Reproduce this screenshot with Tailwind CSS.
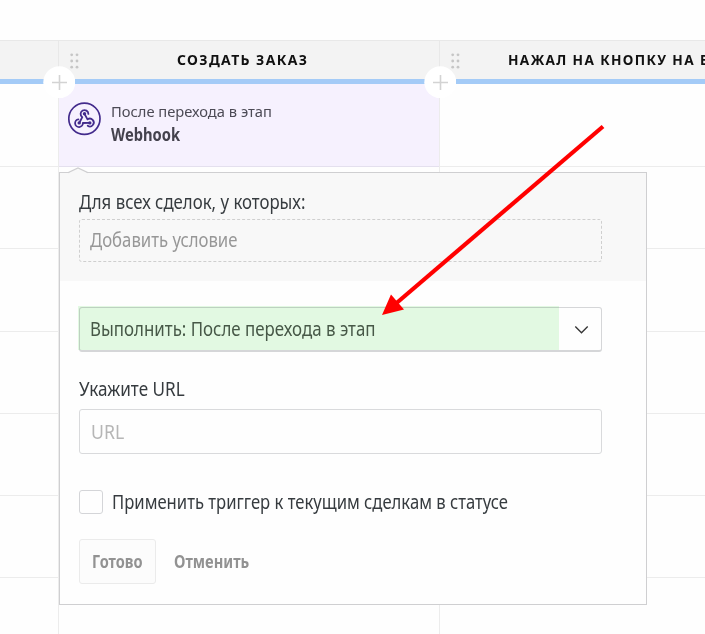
<!DOCTYPE html>
<html lang="ru">
<head>
<meta charset="utf-8">
<title>Webhook</title>
<script src="https://cdn.jsdelivr.net/npm/@tailwindcss/browser@4"></script>
</head>
<body class="relative h-[634px] w-[705px] overflow-hidden bg-[#fefefe] font-['Noto_Sans',sans-serif] text-[#363b3f]">
<!-- Board -->
<div class="flex h-[634px] w-[705px] flex-col pt-10">
  <header class="flex h-[44px] shrink-0 border-t border-b-[5px] border-t-[#e8e8e8] border-b-[#a4cbf7] bg-[#f3f3f3] text-[15px] leading-[20px] font-bold text-[#111] whitespace-nowrap">
    <div class="w-[59px] shrink-0 border-r border-[#e8e8e8]"></div>
    <div class="flex w-[381px] shrink-0 border-r border-[#e8e8e8] pt-[8px]">
      <svg class="mt-[4px] ml-[11px] h-4 w-[9px] shrink-0" viewBox="0 0 9 16" fill="#c6c6c6"><circle cx="1.7" cy="1.8" r="1.4"/><circle cx="7" cy="1.8" r="1.4"/><circle cx="1.7" cy="8" r="1.4"/><circle cx="7" cy="8" r="1.4"/><circle cx="1.7" cy="14.2" r="1.4"/><circle cx="7" cy="14.2" r="1.4"/></svg>
      <span class="ml-[98px] inline-block origin-left scale-x-[0.93] tracking-[1.5px]">СОЗДАТЬ ЗАКАЗ</span>
    </div>
    <div class="flex w-[265px] shrink-0 overflow-hidden pt-[8px]">
      <svg class="mt-[4px] ml-[11px] h-4 w-[9px] shrink-0" viewBox="0 0 9 16" fill="#c6c6c6"><circle cx="1.7" cy="1.8" r="1.4"/><circle cx="7" cy="1.8" r="1.4"/><circle cx="1.7" cy="8" r="1.4"/><circle cx="7" cy="8" r="1.4"/><circle cx="1.7" cy="14.2" r="1.4"/><circle cx="7" cy="14.2" r="1.4"/></svg>
      <span class="ml-[48px] inline-block origin-left scale-x-[0.908] tracking-[1.5px]">НАЖАЛ НА КНОПКУ НА В</span>
    </div>
  </header>
  <main class="flex grow">
    <div class="grid w-[59px] shrink-0 grid-rows-[83px_82px_83px_82px_82px_82px_1fr] divide-y divide-[#ececec] border-r border-[#ececec]"><i></i><i></i><i></i><i></i><i></i><i></i><i></i></div>
    <div class="grid w-[381px] shrink-0 grid-rows-[83px_82px_83px_82px_82px_82px_1fr] divide-y divide-[#e4e0ee] border-r border-[#ececec]">
      <section class="flex bg-[#f6f1fe] pl-2">
        <svg class="mt-[17px] size-[35px] shrink-0" viewBox="0 0 35 35" fill="none" stroke="#432b8c" stroke-width="1.7" stroke-linecap="round" stroke-linejoin="round"><circle cx="17.4" cy="17.8" r="15.6"/><g stroke-width="1.8"><path d="M21.4 12.9A3.9 3.9 0 1 0 15.3 16.2L12.5 21.5"/><path d="M17.5 12.8L20.5 18.4A3.9 3.9 0 1 1 20.7 24.8"/><path d="M11.4 18.3A3.9 3.9 0 1 0 15.9 22L22.5 21.9"/></g><g fill="#432b8c" stroke="none"><circle cx="17.5" cy="12.7" r="1.7"/><circle cx="12.2" cy="21.9" r="1.7"/><circle cx="22.8" cy="21.9" r="1.7"/></g></svg>
        <div class="pt-[15px] pl-[9px] whitespace-nowrap">
          <div><span class="inline-block origin-left scale-x-[0.98] text-[15px] leading-[22px] text-[#4c4a55]">После перехода в этап</span></div>
          <div><span class="inline-block origin-left scale-x-[0.865] text-[17px] leading-[24px] font-bold text-[#44424d]">Webhook</span></div>
        </div>
      </section>
      <i></i><i></i><i></i><i></i><i></i><i></i>
    </div>
    <div class="grid grow grid-rows-[83px_82px_83px_82px_82px_82px_1fr] divide-y divide-[#ececec]"><i></i><i></i><i></i><i></i><i></i><i></i><i></i></div>
  </main>
</div>
<!-- Add-stage buttons over the column borders -->
<svg class="absolute top-[66px] left-[43px] size-8" viewBox="0 0 32 32"><circle cx="16.3" cy="16.3" r="16" fill="#fff"/><path d="M9 16.5H24M16.5 9V24" stroke="#d3d3d3" stroke-width="1.6"/></svg>
<svg class="absolute top-[66px] left-[424px] size-8" viewBox="0 0 32 32"><circle cx="16.3" cy="16.3" r="16" fill="#fff"/><path d="M9 16.5H24M16.5 9V24" stroke="#d3d3d3" stroke-width="1.6"/></svg>
<!-- Trigger settings popup -->
<div class="absolute top-[172px] left-[59px] flex h-[433px] w-[588px] flex-col border border-[#cfcfd1] bg-[#fefefe] text-[19px] leading-[26px] whitespace-nowrap">
  <svg class="absolute -top-[6px] left-[8px] h-[7px] w-[20px]" viewBox="0 0 20 7"><path d="M0 7L1 5.5L10 1L19 5.5L20 7Z" fill="#f8f8f8"/><path d="M0 5.6L10 1L20 5.6" fill="none" stroke="#cfcfd1" stroke-width="1.2"/></svg>
  <section class="h-[108px] shrink-0 bg-[#f8f8f8] px-[19px] pt-[16px]">
    <div class="h-[30px]"><span class="inline-block origin-left scale-x-[0.884]">Для всех сделок, у которых:</span></div>
    <div class="h-[43px] w-[523px] rounded-[3px] border border-dashed border-[#cfcfcf] pt-[7px] pl-[10px] text-[#979797]"><span class="inline-block origin-left scale-x-[0.88]">Добавить условие</span></div>
  </section>
  <section class="flex flex-col px-[19px] pt-[26px]">
    <div class="relative flex h-[45px] w-[523px] rounded-[3px] border border-b-2 border-[#d5d6d8]">
      <div class="w-[480px] pt-[8px] pl-[10px] text-[#4f5a50]"><span class="inline-block origin-left scale-x-[0.889]">Выполнить: После перехода в этап</span></div>
      <svg class="mt-[17px] ml-[14px] h-[10px] w-[15px]" viewBox="0 0 15 10" fill="none" stroke="#333" stroke-width="1.3"><path d="M1.3 1.5L7.5 7.8L13.7 1.5"/></svg>
      <!-- Highlight over the select's value -->
      <div class="absolute -top-[2px] -left-[2px] h-[44px] w-[481px] bg-[#e3fae3] mix-blend-multiply"></div>
    </div>
    <div class="mt-[24px] h-[33px]"><span class="inline-block origin-left scale-x-[0.9]">Укажите URL</span></div>
    <div class="h-[45px] w-[523px] rounded-[3px] border border-[#d9dadc] pt-[9px] pl-[11px] text-[#b6b6b6]"><span class="inline-block origin-left scale-x-[0.93]">URL</span></div>
    <div class="mt-[36px] flex h-[24px] items-center">
      <div class="size-6 shrink-0 rounded-[3px] border border-[#d4d5d8]"></div>
      <span class="ml-[9px] inline-block origin-left scale-x-[0.876]">Применить триггер к текущим сделкам в статусе</span>
    </div>
    <div class="mt-[25px] flex h-[45px] text-[18px] font-bold text-[#929292]">
      <div class="w-[77px] rounded-[3px] border border-[#ebebeb] bg-[#fcfcfc] pt-[8px] pl-[12px]"><span class="inline-block origin-left scale-x-[0.81]">Готово</span></div>
      <span class="ml-[18px] inline-block origin-left scale-x-[0.815] pt-[9px]">Отменить</span>
    </div>
  </section>
</div>
<!-- Pointer arrow -->
<svg class="absolute top-0 left-0 h-[634px] w-[705px]" viewBox="0 0 705 634"><path d="M603 126.5L396 303.5" stroke="#f00" stroke-width="4.2"/><path d="M382 315L391 294.5L404 309.5Z" fill="#f00"/></svg>
</body>
</html>
